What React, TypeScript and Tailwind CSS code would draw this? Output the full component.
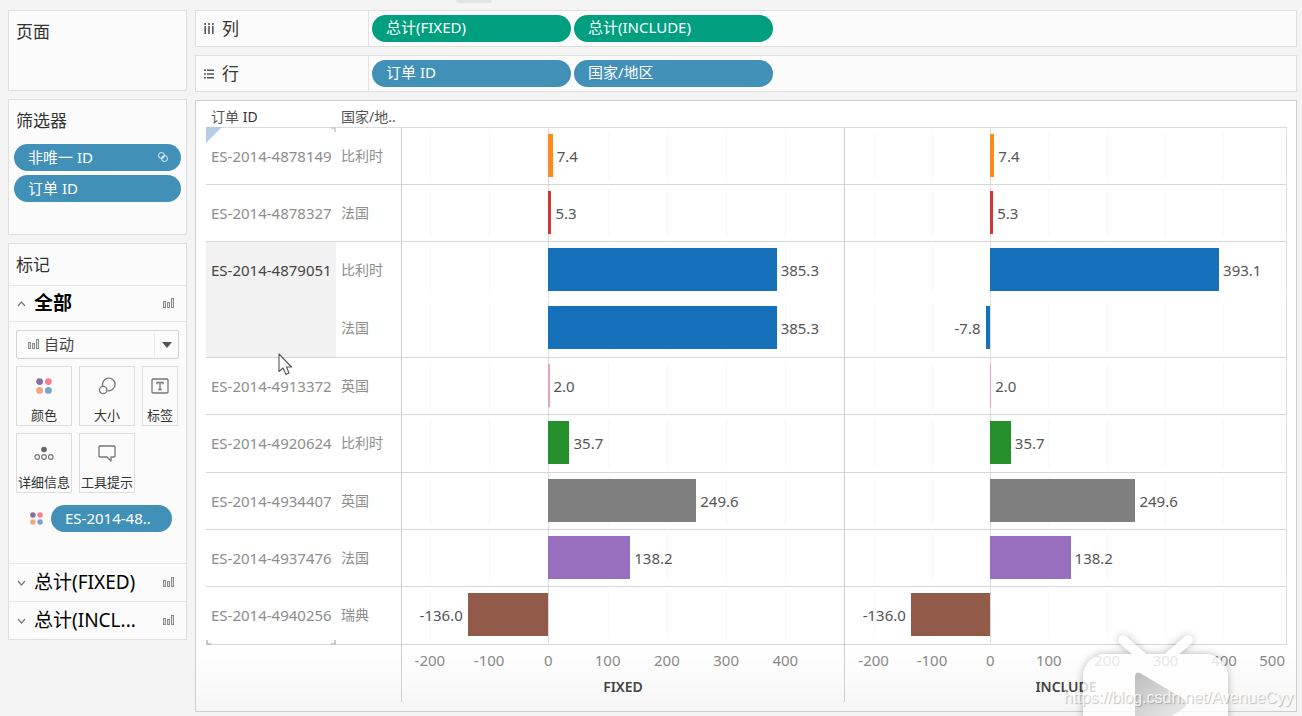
import type { ReactNode } from "react";

type Row = {
  id?: string;
  span?: number;
  selected?: boolean;
  country: string;
  color: string;
  fixed: number;
  include: number;
  tall?: boolean;
};

const rows: Row[] = [
  { id: "ES-2014-4878149", country: "比利时", color: "#ff8a1c", fixed: 7.4, include: 7.4 },
  { id: "ES-2014-4878327", country: "法国", color: "#cf3835", fixed: 5.3, include: 5.3 },
  { id: "ES-2014-4879051", span: 2, selected: true, country: "比利时", color: "#1771ba", fixed: 385.3, include: 393.1, tall: true },
  { country: "法国", color: "#1771ba", fixed: 385.3, include: -7.8, tall: true },
  { id: "ES-2014-4913372", country: "英国", color: "#e2a0c8", fixed: 2, include: 2 },
  { id: "ES-2014-4920624", country: "比利时", color: "#258f2b", fixed: 35.7, include: 35.7, tall: true },
  { id: "ES-2014-4934407", country: "英国", color: "#7f7f7f", fixed: 249.6, include: 249.6 },
  { id: "ES-2014-4937476", country: "法国", color: "#976fbe", fixed: 138.2, include: 138.2 },
  { id: "ES-2014-4940256", country: "瑞典", color: "#925a49", fixed: -136, include: -136, tall: true },
];

type Axis = { min: number; max: number; ticks: number[] };
const fixedAxis: Axis = { min: -247, max: 499, ticks: [-200, -100, 0, 100, 200, 300, 400] };
const includeAxis: Axis = { min: -249, max: 508, ticks: [-200, -100, 0, 100, 200, 300, 400, 500] };

const pct = (axis: Axis, v: number) => ((v - axis.min) / (axis.max - axis.min)) * 100;

function Plot({ axis, value, color }: { axis: Axis; value: number; color: string }) {
  const zero = pct(axis, 0);
  const end = pct(axis, value);
  return (
    <div className="relative h-[56px]">
      {axis.ticks.map((t) => (
        <span
          key={t}
          className={t === 0 ? "absolute inset-y-0 w-px bg-[#dcdcdc]" : "absolute inset-y-1 w-px bg-[#f7f7f7]"}
          style={{ left: `${pct(axis, t)}%` }}
        />
      ))}
      <div
        className="absolute top-[6px] h-[43px]"
        style={{ left: `${Math.min(zero, end)}%`, width: `${Math.abs(end - zero)}%`, background: color }}
      />
      {value < 0 ? (
        <span className="absolute top-[18px] pr-[5px] leading-5" style={{ right: `${100 - end}%` }}>
          {value.toFixed(1)}
        </span>
      ) : (
        <span className="absolute top-[18px] pl-1 leading-5" style={{ left: `${end}%` }}>
          {value.toFixed(1)}
        </span>
      )}
    </div>
  );
}

function AxisScale({ axis, title }: { axis: Axis; title: string }) {
  return (
    <div className="relative h-[57px]">
      {axis.ticks.map((t) =>
        t === 500 ? (
          <span key={t} className="absolute right-[2px] top-[5px] leading-5">
            {t}
          </span>
        ) : (
          <span
            key={t}
            className="absolute top-[5px] -translate-x-1/2 leading-5"
            style={{ left: `${pct(axis, t)}%` }}
          >
            {t}
          </span>
        ),
      )}
      <div className="pt-8 text-center text-[14px] font-semibold leading-5 text-[#444]">{title}</div>
    </div>
  );
}

function BarsIcon() {
  return (
    <svg width="12" height="12" viewBox="0 0 12 12" fill="#e2e2e2" stroke="#8c8c8c" aria-hidden="true">
      <rect x="0.5" y="3.5" width="2" height="6" />
      <rect x="4.5" y="4.5" width="2" height="5" />
      <rect x="8.5" y="0.5" width="2" height="9" />
    </svg>
  );
}

function Dots({ size }: { size: number }) {
  return (
    <svg width={size} height={size} viewBox="0 0 16 16" aria-hidden="true">
      <circle cx="3.6" cy="3.6" r="3.4" fill="#84709a" />
      <circle cx="12.4" cy="3.6" r="3.4" fill="#f4808a" />
      <circle cx="3.6" cy="12.4" r="3.4" fill="#f2a77c" />
      <circle cx="12.4" cy="12.4" r="3.4" fill="#7fa3c8" />
    </svg>
  );
}

function Chevron({ up = false }: { up?: boolean }) {
  return (
    <svg width="9" height="6" viewBox="0 0 9 6" fill="none" stroke="#777" strokeWidth="1.2" aria-hidden="true">
      <path d={up ? "M1 5 4.5 1 8 5" : "M1 1 4.5 5 8 1"} />
    </svg>
  );
}

function Pill({ children, className, icon }: { children: ReactNode; className: string; icon?: ReactNode }) {
  return (
    <button
      className={`flex h-[27px] items-center justify-between rounded-full pb-[2px] text-left text-[15px] leading-5 text-white ${className}`}
    >
      <span>{children}</span>
      {icon}
    </button>
  );
}

function MarkButton({ label, icon }: { label: string; icon: ReactNode }) {
  return (
    <button className="flex h-[60px] flex-col items-center justify-between border border-[#dedede] pt-[9px] text-[13px] leading-5 text-[#333]">
      <span className="flex h-5 items-center">{icon}</span>
      <span className="whitespace-nowrap">{label}</span>
    </button>
  );
}

function SectionHeader({ label, open = false }: { label: string; open?: boolean }) {
  return (
    <button
      aria-expanded={open}
      className={`flex w-full items-center border-t border-[#e6e6e6] pl-2 pr-[11px] text-left text-[19px] text-black ${
        open ? "h-9 font-bold" : "h-[38px]"
      }`}
    >
      <Chevron up={open} />
      <span className="ml-2">{label}</span>
      <span className="ml-auto">
        <BarsIcon />
      </span>
    </button>
  );
}

function Shelf({ title, icon, children }: { title: string; icon: ReactNode; children: ReactNode }) {
  return (
    <section className="flex h-[37px] border border-[#dfdfdf] bg-[#fbfbfb]">
      <h2 className="flex w-[173px] items-center gap-2 border-r border-[#e3e3e3] pl-2 text-[17px] text-[#333]">
        {icon}
        {title}
      </h2>
      <div className="flex items-center gap-[3px] pb-px pl-[3px]">{children}</div>
    </section>
  );
}

const panel = "border border-[#dfdfdf] bg-[#fbfbfb]";

export default function App() {
  return (
    <div className="relative flex min-h-screen flex-col overflow-hidden bg-[#f4f4f4] font-['Noto_Sans','Noto_Sans_CJK_SC',sans-serif]">
      <div className="h-[10px] pl-[456px]">
        <div className="h-[3px] w-9 rounded-b-sm bg-[#e4e4e4]" />
      </div>
      <div className="flex flex-1 gap-2 pb-1 pl-2 pr-[5px]">
        <aside className="flex w-[179px] shrink-0 flex-col gap-2 text-[#333]">
          <section className={`h-[81px] px-[7px] pt-[9px] ${panel}`}>
            <h2 className="text-[17px] leading-6">页面</h2>
          </section>
          <section className={`h-[136px] px-[5px] pt-[9px] ${panel}`}>
            <h2 className="px-[2px] text-[17px] leading-6">筛选器</h2>
            <div className="mt-[11px] flex flex-col gap-1">
              <Pill
                className="bg-[#4190b8] pl-[14px] pr-3"
                icon={
                  <svg width="12" height="12" viewBox="0 0 12 12" fill="none" stroke="#e4f0f6" aria-hidden="true">
                    <circle cx="4.5" cy="4.5" r="3" />
                    <circle cx="7.5" cy="7.5" r="3" />
                    <path d="M4.5 7.5 7.5 4.5" />
                  </svg>
                }
              >
                非唯一 ID
              </Pill>
              <Pill className="bg-[#4190b8] px-[14px]">订单 ID</Pill>
            </div>
          </section>
          <section className={panel}>
            <h2 className="px-[7px] pb-2 pt-[9px] text-[17px] leading-6">标记</h2>
            <SectionHeader label="全部" open />
            <div className="h-[242px] border-t border-[#e6e6e6] px-[7px] pt-2">
              <div className="relative">
                <select
                  aria-label="标记类型"
                  className="h-[29px] w-full appearance-none rounded-xs border border-[#d2d2d2] bg-[#fbfbfb] pl-[27px] text-[15px] text-[#444]"
                >
                  <option>自动</option>
                </select>
                <span className="pointer-events-none absolute inset-y-0 left-3 flex items-center">
                  <BarsIcon />
                </span>
                <span className="pointer-events-none absolute inset-y-px right-px flex w-6 items-center justify-center border-l border-[#eeeeee]">
                  <svg width="10" height="6" viewBox="0 0 10 6" aria-hidden="true">
                    <path d="M0 0H10L5 6Z" fill="#555" />
                  </svg>
                </span>
              </div>
              <div className="mt-[7px] grid grid-cols-[56px_56px_36px] gap-[7px]">
                <MarkButton label="颜色" icon={<Dots size={16} />} />
                <MarkButton
                  label="大小"
                  icon={
                    <svg width="18" height="18" viewBox="0 0 18 18" fill="none" stroke="#777" strokeWidth="1.3" aria-hidden="true">
                      <path d="M4.8 9.3A6.3 6.3 0 1 1 9.6 13.6" />
                      <circle cx="5.2" cy="13" r="3.7" />
                    </svg>
                  }
                />
                <MarkButton
                  label="标签"
                  icon={
                    <svg width="18" height="16" viewBox="0 0 18 16" fill="none" stroke="#777" strokeWidth="1.3" aria-hidden="true">
                      <rect x="1" y="1" width="16" height="14" rx="1" />
                      <path d="M6 6.2V4.5h6v1.7M9 4.5v7M7.3 11.5h3.4" />
                    </svg>
                  }
                />
                <MarkButton
                  label="详细信息"
                  icon={
                    <svg width="20" height="15" viewBox="0 0 20 15" fill="none" stroke="#777" strokeWidth="1.2" aria-hidden="true">
                      <circle cx="10" cy="3.5" r="2.8" fill="#666" stroke="none" />
                      <circle cx="3.2" cy="11" r="2.3" />
                      <circle cx="10" cy="11" r="2.3" />
                      <circle cx="16.8" cy="11" r="2.3" />
                    </svg>
                  }
                />
                <MarkButton
                  label="工具提示"
                  icon={
                    <svg width="18" height="17" viewBox="0 0 18 17" fill="none" stroke="#777" strokeWidth="1.3" strokeLinejoin="round" aria-hidden="true">
                      <path d="M2 1h14q1 0 1 1v9q0 1-1 1h-3v4l-4-4H2q-1 0-1-1V2q0-1 1-1Z" />
                    </svg>
                  }
                />
              </div>
              <div className="mt-3 flex items-center gap-2 pl-[14px]">
                <Dots size={13} />
                <Pill className="w-[121px] bg-[#4190b8] pl-[14px]">ES-2014-48..</Pill>
              </div>
            </div>
            <SectionHeader label="总计(FIXED)" />
            <SectionHeader label="总计(INCL..." />
          </section>
        </aside>

        <main className="flex min-w-0 flex-1 flex-col gap-2">
          <Shelf
            title="列"
            icon={
              <svg width="10" height="11" viewBox="0 0 10 11" fill="none" stroke="#555" strokeWidth="1.6" aria-hidden="true">
                <path d="M1.2 0v2M1.2 3v8M5 0v2M5 3v8M8.8 0v2M8.8 3v8" />
              </svg>
            }
          >
            <Pill className="w-[199px] bg-[#009f80] px-[14px]">总计(FIXED)</Pill>
            <Pill className="w-[199px] bg-[#009f80] px-[14px]">总计(INCLUDE)</Pill>
          </Shelf>
          <Shelf
            title="行"
            icon={
              <svg width="10" height="10" viewBox="0 0 10 10" fill="none" stroke="#555" strokeWidth="1.5" aria-hidden="true">
                <path d="M0 1.2h2M3 1.2h7M0 5h2M3 5h7M0 8.8h2M3 8.8h7" />
              </svg>
            }
          >
            <Pill className="w-[199px] bg-[#4190b8] px-[14px]">订单 ID</Pill>
            <Pill className="w-[199px] bg-[#4190b8] px-[14px]">国家/地区</Pill>
          </Shelf>

          <section className="relative flex-1 border border-[#cfcfcf] bg-linear-to-b from-white from-90% to-[#f6f6f6] pb-[9px] pl-[10px] pr-[9px]">
            <table className="w-full table-fixed border-separate border-spacing-0 text-[15px] text-[#555]">
              <colgroup>
                <col className="w-[130px]" />
                <col className="w-[65px]" />
                <col />
                <col />
              </colgroup>
              <thead>
                <tr className="h-[27px] text-left text-[14px] leading-5 text-[#555]">
                  <th className="relative border-b border-[#dcdcdc] p-0 pl-[5px] pt-[5px] font-normal">
                    订单 <span className="text-[#333]">ID</span>
                    <svg className="absolute left-0 top-[26px]" width="130" height="16" viewBox="0 0 130 16" fill="none" aria-hidden="true">
                      <path d="M0 0H16L0 16Z" fill="#b5cce2" />
                      <path d="M125 1h4v4" stroke="#c4c4c4" strokeWidth="1.5" />
                    </svg>
                  </th>
                  <th className="whitespace-nowrap border-b border-[#dcdcdc] p-0 pl-[5px] pt-[5px] font-normal">国家/地..</th>
                  <th className="border-b border-[#dcdcdc] p-0" aria-label="FIXED" />
                  <th className="border-b border-[#dcdcdc] p-0" aria-label="INCLUDE" />
                </tr>
              </thead>
              <tbody>
                {rows.map((r, i) => {
                  const line = r.span ? "" : "border-b border-[#d6d6d6]";
                  return (
                    <tr key={i} className={r.tall ? "h-[58px]" : "h-[57px]"}>
                      {r.id && (
                        <th
                          rowSpan={r.span ?? 1}
                          className={`whitespace-nowrap border-b border-[#d6d6d6] p-0 pl-[5px] pt-[18px] text-left align-top font-normal leading-5 ${
                            r.selected ? "bg-[#f2f2f2] text-[#444]" : "text-[#8e8e8e]"
                          }`}
                        >
                          {r.id}
                        </th>
                      )}
                      <td className={`p-0 pl-[5px] pt-[18px] align-top text-[14px] leading-5 text-[#8e8e8e] ${line}`}>
                        {r.country}
                      </td>
                      <td className={`border-l border-l-[#cfcfcf] p-0 align-top ${line}`}>
                        <Plot axis={fixedAxis} value={r.fixed} color={r.color} />
                      </td>
                      <td className={`border-l border-r border-l-[#cfcfcf] border-r-[#dcdcdc] p-0 align-top ${line}`}>
                        <Plot axis={includeAxis} value={r.include} color={r.color} />
                      </td>
                    </tr>
                  );
                })}
              </tbody>
              <tfoot>
                <tr className="text-[#888]">
                  <td colSpan={2} className="relative p-0">
                    <svg className="absolute -top-[5px] left-0" width="130" height="5" viewBox="0 0 130 5" fill="none" stroke="#bbb" strokeWidth="1.5" aria-hidden="true">
                      <path d="M1 0v4h4M129 0v4h-4" />
                    </svg>
                  </td>
                  <td className="border-l border-[#cfcfcf] p-0">
                    <AxisScale axis={fixedAxis} title="FIXED" />
                  </td>
                  <td className="border-l border-[#cfcfcf] p-0">
                    <AxisScale axis={includeAxis} title="INCLUDE" />
                  </td>
                </tr>
              </tfoot>
            </table>
            <svg className="absolute left-[82px] top-[252px]" width="15" height="23" viewBox="0 0 15 23" aria-hidden="true">
              <path d="M1 1V18.5L5 15 8 21.5 11 20 8.5 14H13.5Z" fill="#fff" stroke="#555" strokeWidth="1.1" strokeLinejoin="round" />
            </svg>
          </section>
        </main>
      </div>

      <svg className="pointer-events-none absolute bottom-0 right-[62px]" width="170" height="90" viewBox="0 0 170 90" aria-hidden="true">
        <defs>
          <filter id="glow" x="-20%" y="-20%" width="140%" height="140%">
            <feDropShadow dx="0" dy="0" stdDeviation="4" floodColor="#000" floodOpacity="0.35" />
          </filter>
          <linearGradient id="play" x1="0" y1="0" x2="1" y2="1">
            <stop offset="0" stopColor="#bdbdbd" />
            <stop offset="1" stopColor="#ececec" />
          </linearGradient>
        </defs>
        <g filter="url(#glow)" opacity="0.8">
          <path d="M53 14 77 35M118 14 94 35" stroke="#fff" strokeWidth="9" strokeLinecap="round" />
          <rect x="13" y="28" width="145" height="90" rx="23" fill="#fff" />
        </g>
        <path d="M65 90V51Q65 45 70 47L114 73Q119 77 114 82L102 90Z" fill="url(#play)" />
      </svg>
      <div className="pointer-events-none absolute bottom-[8px] right-[9px] font-['Liberation_Sans',sans-serif] text-[16px] leading-5 text-white/80 [text-shadow:1px_1px_1px_rgba(0,0,0,0.25)]">
        https://blog.csdn.net/AvenueCyy
      </div>
    </div>
  );
}
